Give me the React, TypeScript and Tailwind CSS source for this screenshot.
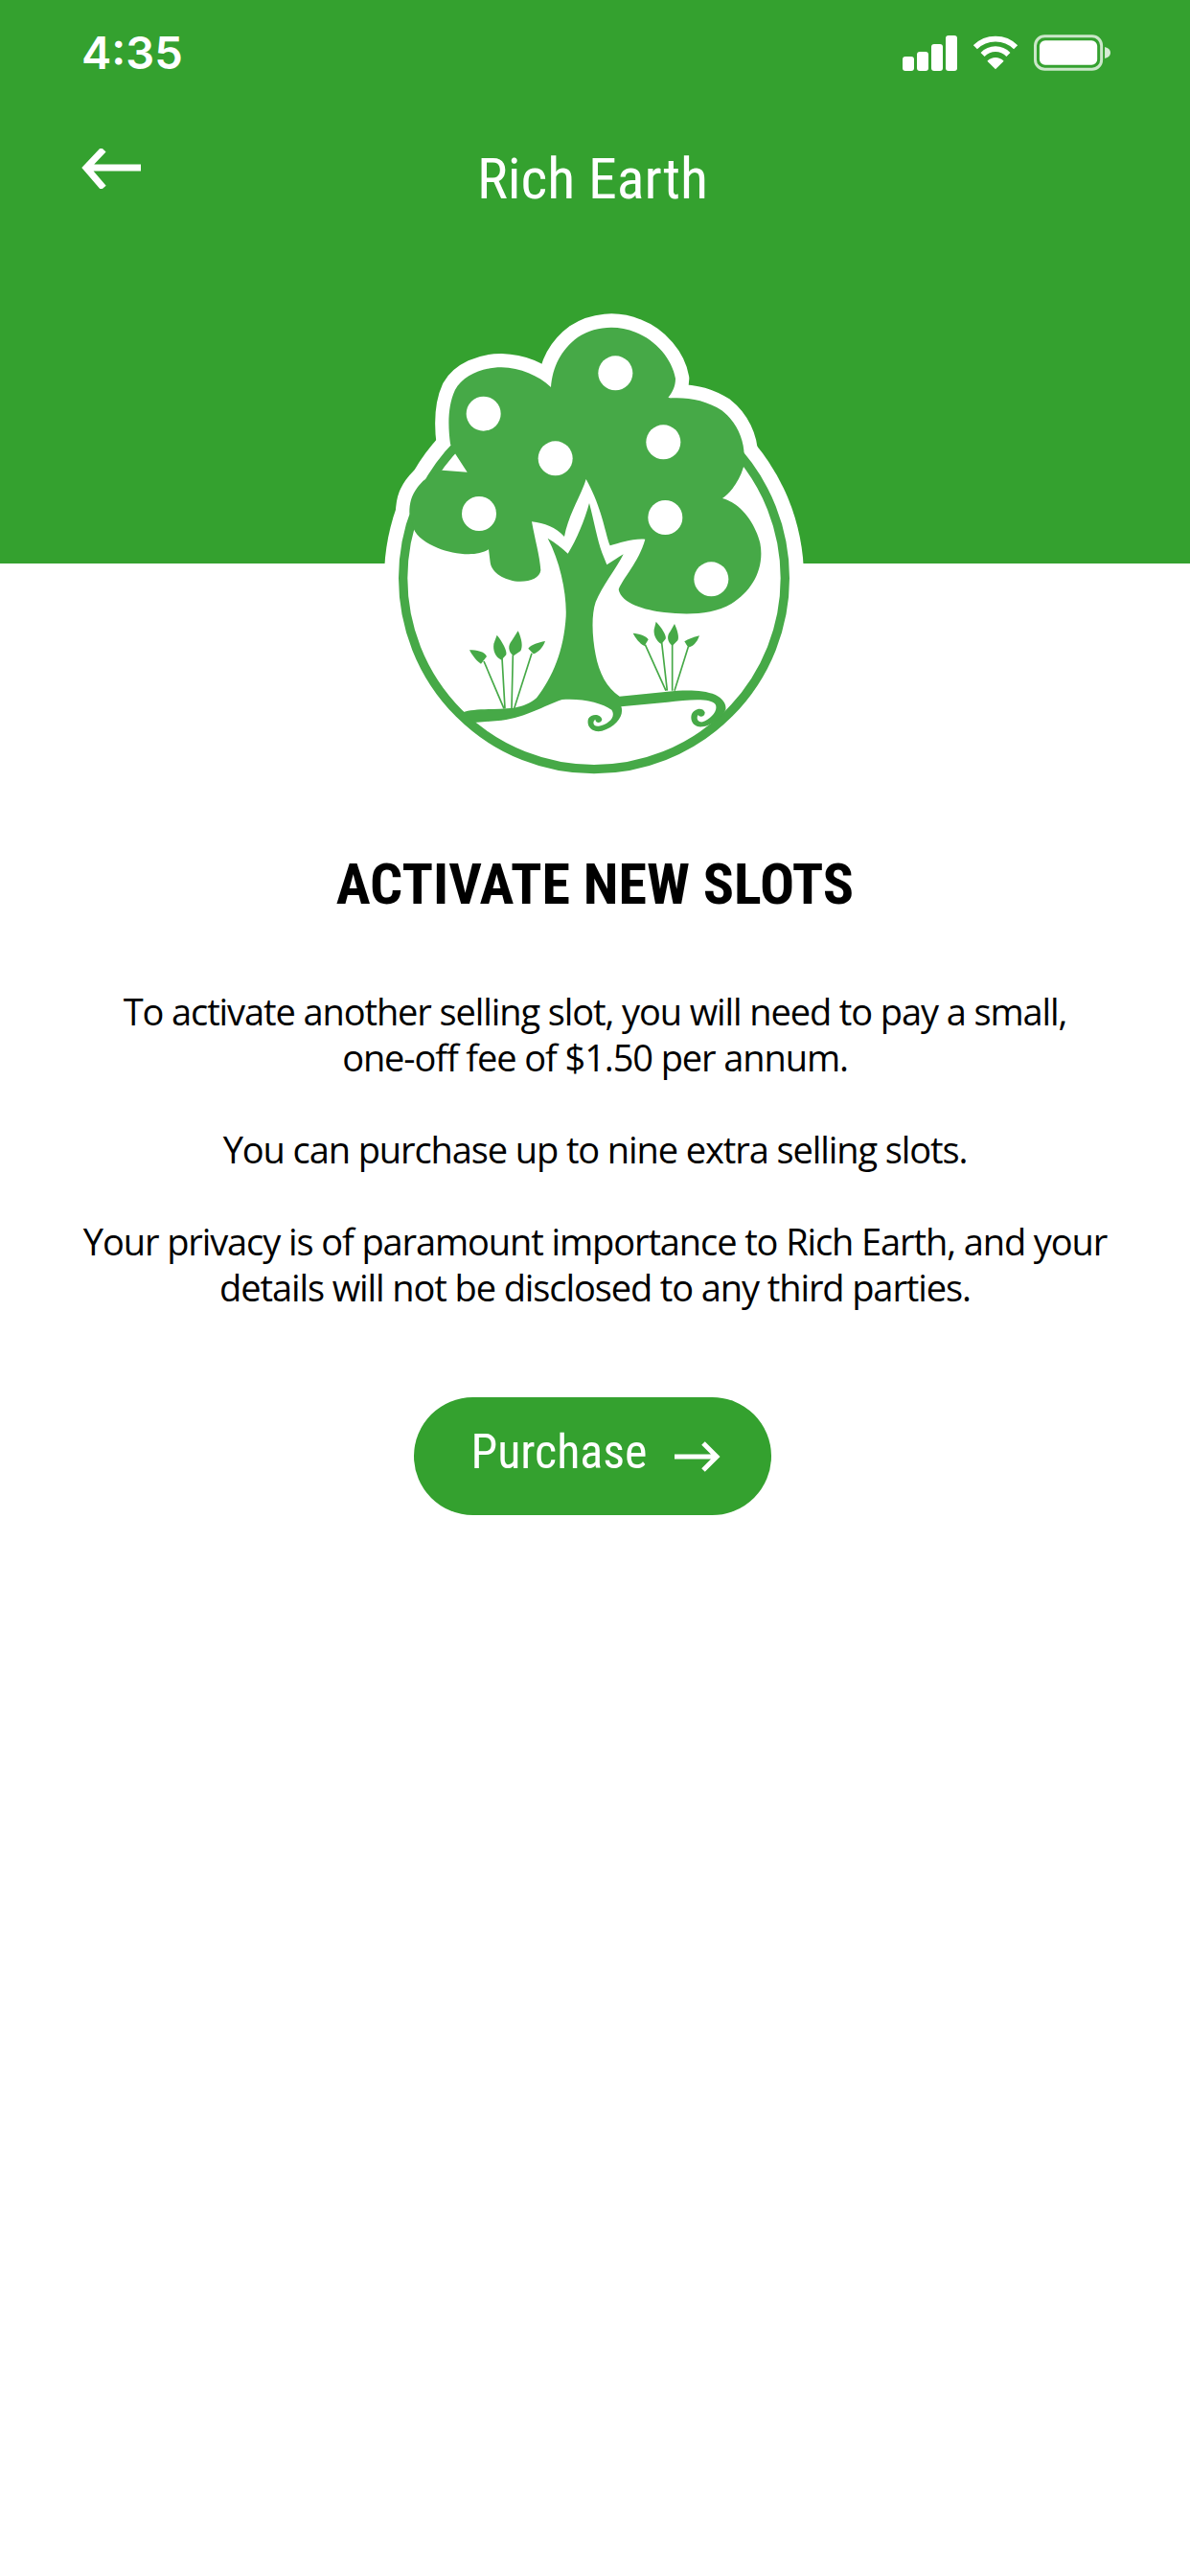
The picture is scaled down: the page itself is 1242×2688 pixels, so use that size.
import React from "react";

const canopy =
  "M270 490 C262 430 262 370 285 320 C310 275 370 250 430 250 C490 252 545 275 585 312 C590 250 615 195 670 155 C720 122 790 115 850 140 C915 165 965 225 975 285 C975 310 965 330 950 347 C1010 342 1070 352 1120 385 C1165 420 1190 475 1190 525 C1192 545 1190 555 1187 565 C1175 605 1150 640 1122 660 C1180 675 1225 740 1240 800 C1255 880 1215 950 1150 990 C1090 1025 1010 1025 940 1017 C880 1010 805 990 797 945 C810 910 860 860 880 788 C840 785 800 800 770 808 C755 770 745 690 695 600 C680 650 640 710 627 780 C600 750 565 738 525 733 C535 790 550 840 553 885 C550 910 520 922 480 920 C440 915 400 895 395 860 L390 820 C350 845 280 835 230 815 C195 800 165 780 155 755 L142 705 C142 670 150 640 185 605 C205 590 225 578 245 572 L323 578 L285 520 Z";
const trunk =
  "M575 785 C600 800 620 815 638 833 C665 790 690 730 705 675 C720 730 730 790 745 830 L760 868 C780 855 795 845 812 835 C790 880 745 935 725 985 C710 1030 715 1100 725 1150 C735 1205 760 1255 800 1280 L950 1265 C1000 1260 1060 1258 1100 1275 C1125 1288 1135 1305 1132 1322 C1115 1350 1085 1372 1060 1375 C1035 1378 1020 1360 1025 1338 C1032 1318 1060 1312 1067 1330 C1068 1342 1052 1348 1046 1338 C1040 1345 1042 1362 1060 1360 C1085 1350 1110 1325 1100 1305 C1085 1285 1020 1290 950 1298 L805 1312 C815 1340 790 1375 745 1388 C715 1395 695 1375 702 1350 C712 1332 742 1335 745 1352 C742 1365 725 1365 724 1352 C715 1358 715 1375 735 1373 C765 1368 790 1345 775 1322 C745 1300 680 1285 620 1290 C560 1310 510 1345 430 1355 L345 1362 L310 1330 C340 1318 400 1322 470 1316 C500 1310 520 1302 540 1285 C590 1220 625 1140 632 1030 C635 960 615 860 575 785 Z";

const Leaf = ({ d }: { d: string }) => <path d={d} fill="#46a947" />;

function Logo() {
  return (
    <svg viewBox="0 0 1470 1560" className="absolute left-[380px] top-[300px] w-[490px] h-[520px]">
      <path d={canopy} fill="#fff" stroke="#fff" strokeWidth="86" strokeLinejoin="round" />
      <circle cx="720" cy="910" r="657" fill="#fff" />
      <circle cx="720" cy="910" r="598" fill="none" stroke="#46a947" strokeWidth="28" />
      <path d={canopy} fill="#46a947" />
      <path d={trunk} fill="#46a947" />
      {[[374, 395], [787, 268], [937, 484], [599, 535], [360, 708], [943, 720], [1087, 913]].map(([x, y]) => (
        <circle key={`${x}-${y}`} cx={x} cy={y} r="54" fill="#fff" />
      ))}
      <g stroke="#46a947" strokeWidth="5" fill="none">
        <path d="M438 1318 L375 1170 M441 1318 L432 1160 M462 1318 L466 1150 M470 1318 L525 1145" />
        <path d="M945 1262 L880 1118 M949 1262 L932 1112 M965 1262 L965 1118 M972 1262 L1015 1125" />
      </g>
      <Leaf d="M330 1135 C352 1135 378 1140 384 1155 L366 1178 C350 1168 338 1150 330 1135 Z" />
      <Leaf d="M416 1088 C432 1108 448 1135 445 1150 L430 1166 C410 1156 403 1135 406 1115 Z" />
      <Leaf d="M482 1075 C494 1100 498 1125 490 1138 L468 1153 C450 1140 450 1120 463 1105 Z" />
      <Leaf d="M567 1107 C560 1127 545 1143 530 1147 L514 1130 C525 1116 545 1112 567 1107 Z" />
      <Leaf d="M842 1082 C860 1084 884 1090 890 1102 L878 1122 C862 1114 850 1098 842 1082 Z" />
      <Leaf d="M914 1046 C932 1065 948 1090 944 1100 L931 1116 C913 1106 906 1085 908 1070 Z" />
      <Leaf d="M972 1053 C982 1075 987 1095 982 1105 L965 1122 C948 1108 948 1090 958 1078 Z" />
      <Leaf d="M1050 1090 C1042 1112 1030 1124 1015 1127 L1003 1108 C1015 1100 1030 1095 1050 1090 Z" />
    </svg>
  );
}

function StatusIcons() {
  return (
    <div className="flex items-center gap-[16px]">
      <svg width="57" height="38" viewBox="0 0 57 38" fill="#fff">
        <rect x="0" y="23" width="12" height="15" rx="3" />
        <rect x="15" y="18" width="12" height="20" rx="3" />
        <rect x="30" y="10" width="12" height="28" rx="3" />
        <rect x="45" y="1" width="12" height="37" rx="3" />
      </svg>
      <svg width="48" height="38" viewBox="0 0 50 38" fill="none" stroke="#fff" strokeWidth="6">
        <path d="M3 13 C15 1 35 1 47 13" />
        <path d="M11 21 C19 13 31 13 39 21" />
        <path d="M25 37 L16 28 C21 23 29 23 34 28 Z" fill="#fff" stroke="none" />
      </svg>
      <svg width="81" height="38" viewBox="0 0 82 38" fill="none">
        <rect x="1.5" y="1.5" width="70" height="35" rx="10" stroke="#fff" strokeOpacity="0.75" strokeWidth="3" />
        <rect x="6" y="6" width="61" height="26" rx="6" fill="#fff" />
        <path d="M75 13 C79 14 81 16 81 19 C81 22 79 24 75 25 Z" fill="#fff" fillOpacity="0.8" />
      </svg>
    </div>
  );
}

export default function App() {
  return (
    <div className="relative w-[1242px] min-h-[2688px] bg-white overflow-hidden">
      <header className="h-[588px] bg-[#34a12f] text-white">
        <div className="flex items-center justify-between pl-[85px] pr-[82px] pt-[28px] h-[81px]">
          <span className="text-[47px] leading-[50px] font-semibold [font-family:Inter,'Liberation_Sans',sans-serif]">4:35</span>
          <StatusIcons />
        </div>
        <div className="relative mt-[71px] flex justify-center pr-[5px]">
          <svg width="62" height="42" viewBox="0 0 62 42" fill="none" stroke="#fff" strokeWidth="7" className="absolute left-[85px] top-[3px]">
            <path d="M62 20 H5 M23 1 L5 20 L23 41" />
          </svg>
          <h1 className="text-[60px] leading-[70px] font-normal [font-family:Roboto,sans-serif] [font-stretch:75%]">Rich Earth</h1>
        </div>
      </header>
      <Logo />
      <main className="flex flex-col items-center pt-[300px]">
        <h2 className="text-[60px] leading-[70px] font-bold text-black [font-family:Roboto,sans-serif] [font-stretch:75%]">ACTIVATE NEW SLOTS</h2>
        <div className="mt-[73px] w-full text-center text-black text-[38px] leading-[48px] tracking-[-1.1px] [font-family:'Open_Sans',sans-serif]">
          <p>To activate another selling slot, you will need to pay a small,<br />one-off fee of $1.50 per annum.</p>
          <p className="mt-[48px]">You can purchase up to nine extra selling slots.</p>
          <p className="mt-[48px]">Your privacy is of paramount importance to Rich Earth, and your<br />details will not be disclosed to any third parties.</p>
        </div>
        <button className="mt-[91px] mr-[5px] w-[373px] h-[123px] rounded-full bg-[#34a12f] text-white flex items-center justify-center gap-[28px] pl-[6px]">
          <span className="text-[50px] leading-[60px] [font-family:Roboto,sans-serif] [font-stretch:75%] -mt-[10px]">Purchase</span>
          <svg width="48" height="32" viewBox="0 0 48 32" fill="none" stroke="#fff" strokeWidth="5">
            <path d="M0 16 H44 M30 2 L44 16 L30 30" />
          </svg>
        </button>
      </main>
    </div>
  );
}
